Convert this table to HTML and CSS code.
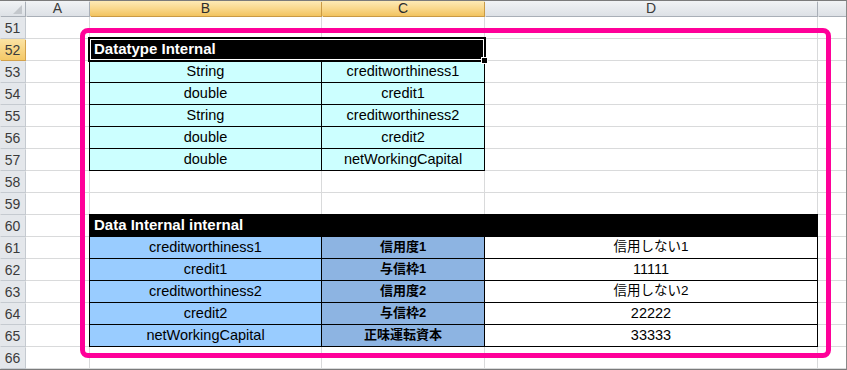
FILE: index.html
```html
<!DOCTYPE html>
<html lang="ja">
<head>
    <meta charset="UTF-8">
    <meta name="viewport" content="width=device-width, initial-scale=1.0">
    <title>Datatype Internal</title>
    <link rel="stylesheet" href="styles.css">
</head>
<body>

    <div class="sheet">
        <table class="grid">
            <colgroup>
                <col class="w-head">
                <col class="w-a">
                <col class="w-b">
                <col class="w-c">
                <col class="w-d">
                <col class="w-e">
            </colgroup>

            <!-- column letters -->
            <tr class="col-heads">
                <th class="corner"></th>
                <th>A</th>
                <th class="sel">B</th>
                <th class="sel">C</th>
                <th>D</th>
                <th></th>
            </tr>

            <tr><th class="row-head">51</th><td></td><td></td><td></td><td></td><td></td></tr>
            <tr>
                <th class="row-head sel">52</th><td></td>
                <td colspan="2" class="box title active">Datatype Internal<span class="fill-handle"></span></td>
                <td></td><td></td>
            </tr>
            <tr><th class="row-head">53</th><td></td><td class="box cyan">String</td><td class="box cyan">creditworthiness1</td><td></td><td></td></tr>
            <tr><th class="row-head">54</th><td></td><td class="box cyan">double</td><td class="box cyan">credit1</td><td></td><td></td></tr>
            <tr><th class="row-head">55</th><td></td><td class="box cyan">String</td><td class="box cyan">creditworthiness2</td><td></td><td></td></tr>
            <tr><th class="row-head">56</th><td></td><td class="box cyan">double</td><td class="box cyan">credit2</td><td></td><td></td></tr>
            <tr><th class="row-head">57</th><td></td><td class="box cyan">double</td><td class="box cyan">netWorkingCapital</td><td></td><td></td></tr>
            <tr><th class="row-head">58</th><td></td><td></td><td></td><td></td><td></td></tr>
            <tr><th class="row-head">59</th><td></td><td></td><td></td><td></td><td></td></tr>
            <tr>
                <th class="row-head">60</th><td></td>
                <td colspan="3" class="box title">Data Internal internal</td>
                <td></td>
            </tr>
            <tr><th class="row-head">61</th><td></td><td class="box sky">creditworthiness1</td><td class="box steel">信用度1</td><td class="box jp">信用しない1</td><td></td></tr>
            <tr><th class="row-head">62</th><td></td><td class="box sky">credit1</td><td class="box steel">与信枠1</td><td class="box">11111</td><td></td></tr>
            <tr><th class="row-head">63</th><td></td><td class="box sky">creditworthiness2</td><td class="box steel">信用度2</td><td class="box jp">信用しない2</td><td></td></tr>
            <tr><th class="row-head">64</th><td></td><td class="box sky">credit2</td><td class="box steel">与信枠2</td><td class="box">22222</td><td></td></tr>
            <tr><th class="row-head">65</th><td></td><td class="box sky">netWorkingCapital</td><td class="box steel">正味運転資本</td><td class="box">33333</td><td></td></tr>
            <tr><th class="row-head">66</th><td></td><td></td><td></td><td></td><td></td></tr>
        </table>

        <!-- pink marker round the two tables -->
        <div class="marker"></div>
    </div>

</body>
</html>
```

FILE: styles.css
```css
html, body {
    margin: 0;
    background-color: #ffffff;
    overflow: hidden;
}

.sheet {
    position: relative;
    width: 846px;
    height: 368px;
    border-top: 1px solid #7b7b7b;
    border-bottom: 1px solid #7b7b7b;
    border-right: 1px solid #8a8a8a;
    overflow: hidden;
    font-family: 'Liberation Sans', 'Noto Sans CJK JP', sans-serif;
    font-size: 14.5px;
    color: #000000;
}

/* the gaps between cells are the gridlines */
.grid {
    table-layout: fixed;
    width: 848px;
    margin: -1px 0 0 -1px;
    border-collapse: separate;
    border-spacing: 1px;
    background-color: #d9dadb;
}

.w-head { width: 25px; }
.w-a { width: 63px; }
.w-b { width: 231px; }
.w-c { width: 162px; }
.w-d { width: 332px; }
.w-e { width: 28px; }

td, th {
    padding: 0;
    white-space: nowrap;
    overflow: hidden;
    text-align: center;
    font-weight: normal;
}

td {
    height: 21px;
    line-height: 18px;
    padding-bottom: 1px;
    box-sizing: border-box;
    background-color: #ffffff;
}

/* Headers */
.col-heads th {
    height: 15px;
    line-height: 15px;
    font-size: 14px;
    color: #3b3b3b;
    background: linear-gradient(#f1f3f5, #dde1e6);
    box-shadow: 1px 1px 0 #a9afb7;
}

.col-heads th.sel {
    color: #2c2c2c;
    background: linear-gradient(#fdeab6, #f9d88c 50%, #f2c35f);
    box-shadow: 1px 1px 0 #c99a45;
}

.corner {
    position: relative;
}

.corner::after {
    content: '';
    position: absolute;
    right: 3px;
    bottom: 2px;
    border-left: 9px solid transparent;
    border-bottom: 9px solid #c3c7cc;
}

.row-head {
    font-size: 14px;
    line-height: 20px;
    color: #3b3b3b;
    background-color: #e4e7eb;
    box-shadow: 1px 1px 0 #c5cad0;
}

.row-head.sel {
    background: linear-gradient(#fbe3a4, #f4c867);
    box-shadow: 1px 1px 0 #d3a24c;
}

/* Table cells */
.box {
    box-shadow: 0 0 0 1px #000000;
}

.cyan {
    background-color: #ccffff;
}

.sky {
    background-color: #99ccff;
}

.steel {
    background-color: #8db4e2;
    font-weight: bold;
    font-size: 13px;
}

.jp {
    font-size: 13.5px;
}

.title {
    background-color: #000000;
    color: #ffffff;
    font-weight: bold;
    font-size: 15px;
    text-align: left;
    padding-left: 4px;
}

.active {
    position: relative;
    overflow: visible;
    box-shadow: inset 0 0 0 1px #ffffff, 0 0 0 2px #000000;
}

.fill-handle {
    position: absolute;
    right: -4px;
    bottom: -4px;
    width: 5px;
    height: 5px;
    background-color: #000000;
    border: 1px solid #ffffff;
}

.marker {
    position: absolute;
    left: 80px;
    top: 27px;
    width: 751px;
    height: 330px;
    box-sizing: border-box;
    border: 5px solid #ff0099;
    border-radius: 8px;
}
```
